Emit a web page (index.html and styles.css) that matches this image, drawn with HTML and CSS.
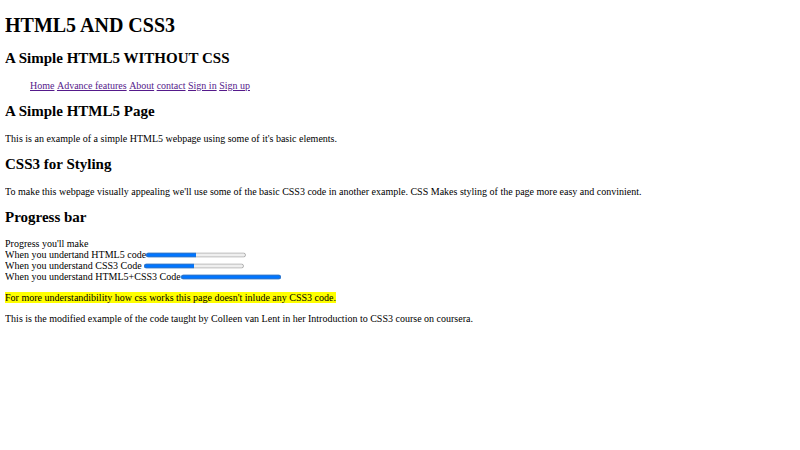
FILE: index.html
```html
<!DOCTYPE html>
<html lang="en">
<head>
<meta charset="utf-8">
<title>HTML5 AND CSS3</title>
<link rel="stylesheet" href="styles.css">
</head>
<body>
<header>
<h1>HTML5 AND CSS3</h1>
<h2>A Simple HTML5 WITHOUT CSS</h2>
<nav>
<ul class="menu">
<li><a href="#">Home</a></li>
<li><a href="#">Advance features</a></li>
<li><a href="#">About</a></li>
<li><a href="#">contact</a></li>
<li><a href="#">Sign in</a></li>
<li><a href="#">Sign up</a></li>
</ul>
</nav>
</header>
<section>
<h2>A Simple HTML5 Page</h2>
<p>This is an example of a simple HTML5 webpage using some of it's basic elements.</p>
</section>
<section>
<h2>CSS3 for Styling</h2>
<p>To make this webpage visually appealing we'll use some of the basic CSS3 code in another example. CSS Makes styling of the page more easy and convinient.</p>
</section>
<section>
<h2>Progress bar</h2>
<div class="progress-list">
Progress you'll make<br>
When you undertand HTML5 code<progress value="50" max="100"></progress><br>
When you understand CSS3 Code <progress value="50" max="100"></progress><br>
When you understand HTML5+CSS3 Code<progress value="100" max="100"></progress>
</div>
<p><mark class="note">For more understandibility how css works this page doesn't inlude any CSS3 code.</mark></p>
<p>This is the modified example of the code taught by Colleen van Lent in her Introduction to CSS3 course on coursera.</p>
</section>
</body>
</html>
```
FILE: styles.css
```css
html {
  font-family: "Liberation Serif", "Times New Roman", serif;
  font-size: 10px;
  color: #000;
  background: #fff;
}
body {
  margin: 5px;
}
h1 {
  font-size: 2em;
  margin: 9px 0 0.67em;
}
h2 {
  font-size: 1.5em;
  margin: 0.83em 0;
}
p {
  margin: 1em 0;
}
.menu {
  margin: 1em 0;
  padding-left: 25px;
  list-style: none;
}
.menu li {
  display: inline;
}
.menu a {
  color: #551a8b;
}
.note {
  background: #ffff00;
  color: #000;
}
progress {
  width: 10em;
  height: 1em;
}
```
